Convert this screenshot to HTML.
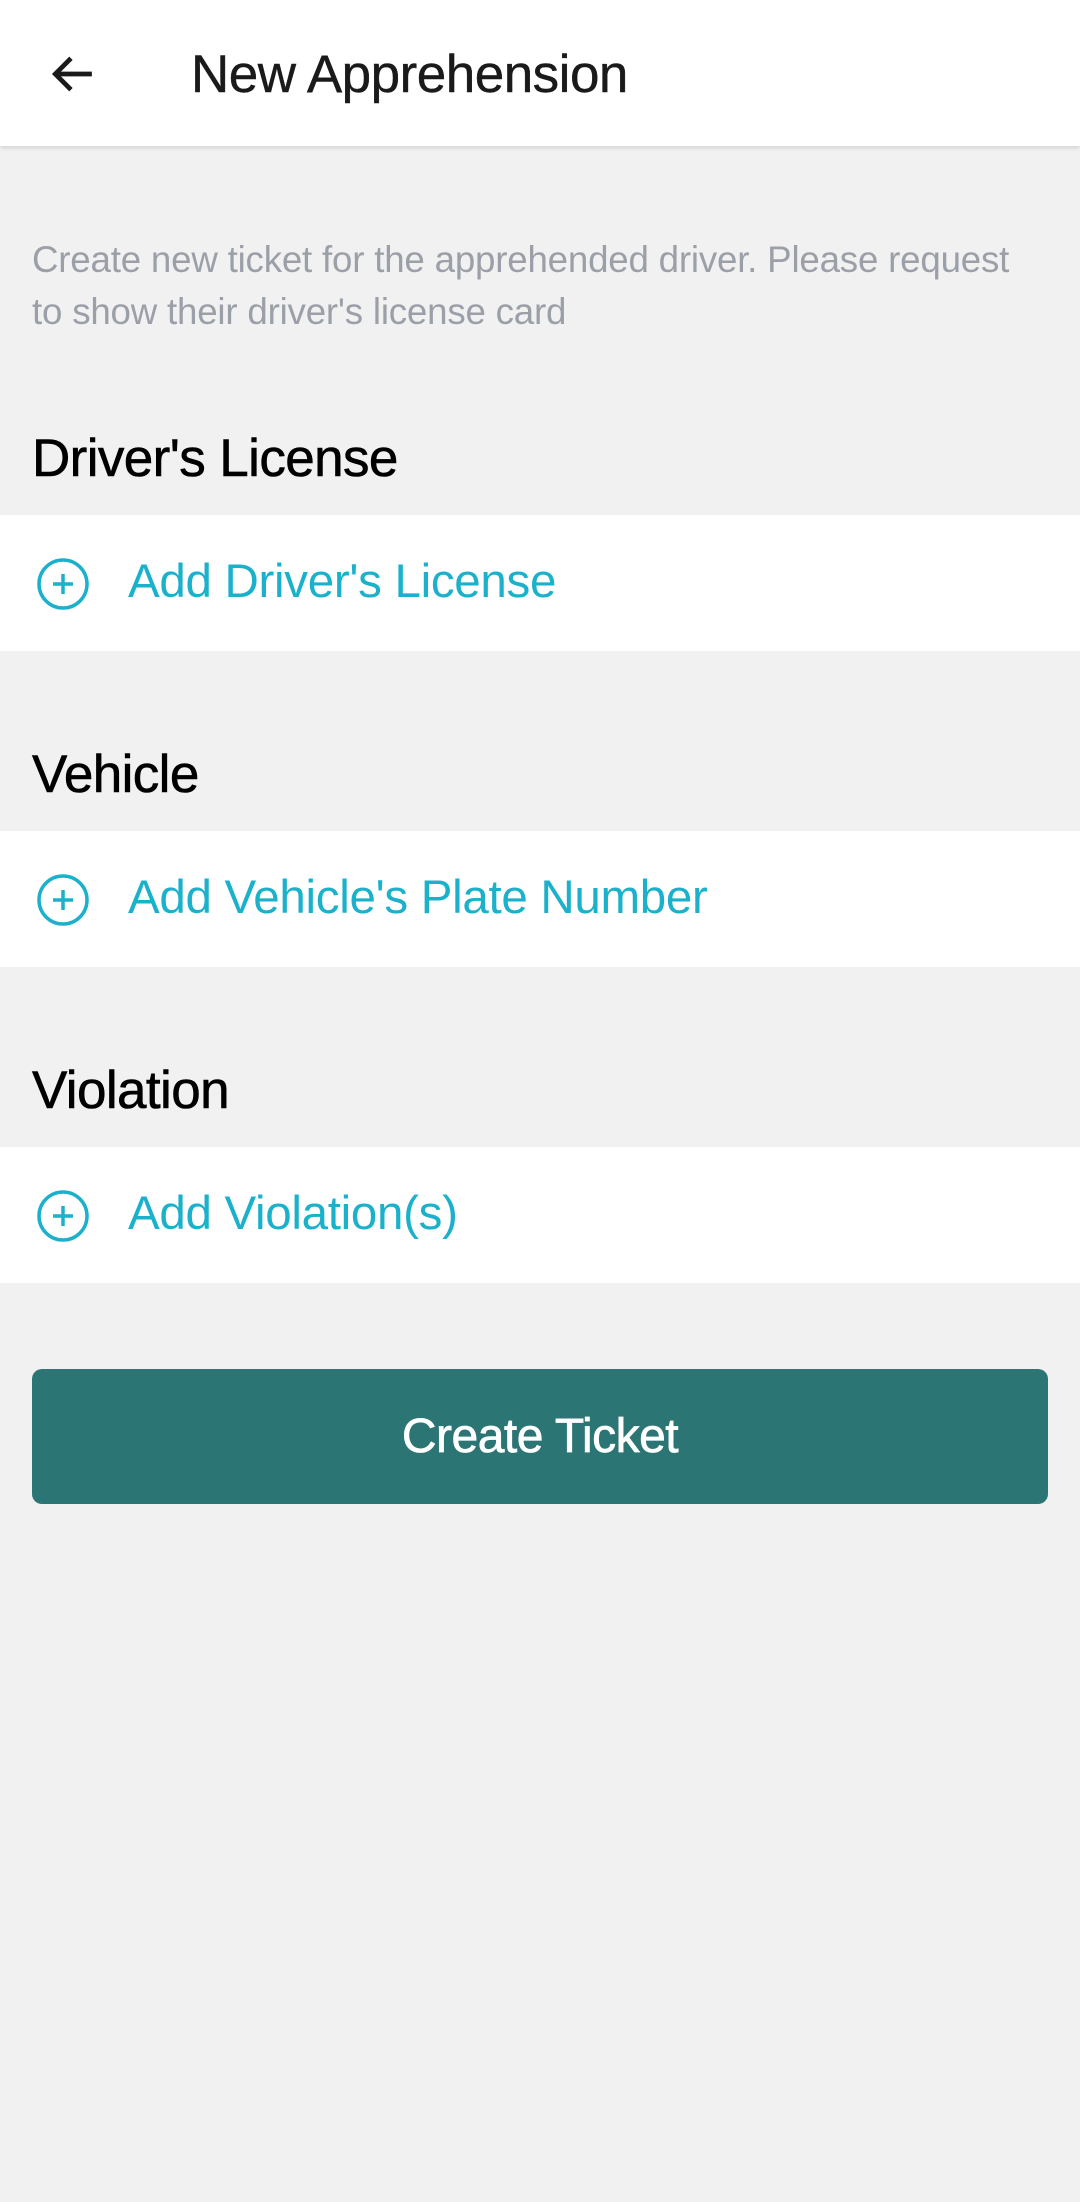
<!DOCTYPE html>
<html><head><meta charset="utf-8"><style>
*{margin:0;padding:0;box-sizing:border-box}
body{width:1080px;height:2202px;background:#f1f1f1;font-family:"Liberation Sans",sans-serif;position:relative;overflow:hidden}
.hdr{position:absolute;left:0;top:0;width:1080px;height:146px;background:#fff;box-shadow:0 2px 4px rgba(0,0,0,0.12)}
.title{position:absolute;left:191px;top:44px;font-size:53px;color:#1a1a1a;line-height:62px;letter-spacing:-0.5px;-webkit-text-stroke:0.4px #1a1a1a}
.desc{position:absolute;left:32px;top:234px;font-size:36.7px;line-height:52px;color:#9ba0a8;width:1040px;letter-spacing:-0.2px}
.h{position:absolute;left:32px;font-size:53px;color:#000;line-height:60px;letter-spacing:-0.6px;-webkit-text-stroke:0.6px #000}
.row{position:absolute;left:0;width:1080px;height:136px;background:#fff}
.row svg{position:absolute;left:35px;top:41px}
.row span{position:absolute;left:128px;top:38px;font-size:47.5px;line-height:58px;color:#1bb1cb;letter-spacing:-0.3px}
.btn{position:absolute;left:32px;top:1369px;width:1016px;height:135px;background:#2b7574;border-radius:10px;color:#fff;font-size:48px;text-align:center;line-height:135px;letter-spacing:-0.5px;-webkit-text-stroke:0.7px #fff}
</style></head><body>
<div class="hdr">
<svg style="position:absolute;left:49px;top:51px" width="46" height="46" viewBox="0 0 44 44"><path d="M41 22H6M21 7L6 22l15 15" fill="none" stroke="#1a1a1a" stroke-width="4.5"/></svg>
<div class="title">New Apprehension</div>
</div>
<div class="desc">Create new ticket for the apprehended driver. Please request<br>to show their driver's license card</div>
<div class="h" style="top:429px">Driver's License</div>
<div class="row" style="top:515px"><svg width="56" height="56" viewBox="0 0 56 56"><circle cx="28" cy="28" r="24" fill="none" stroke="#1bb1cb" stroke-width="3.5"/><path d="M28 18v20M18 28h20" stroke="#1bb1cb" stroke-width="3.5"/></svg><span>Add Driver's License</span></div>
<div class="h" style="top:745px">Vehicle</div>
<div class="row" style="top:831px"><svg width="56" height="56" viewBox="0 0 56 56"><circle cx="28" cy="28" r="24" fill="none" stroke="#1bb1cb" stroke-width="3.5"/><path d="M28 18v20M18 28h20" stroke="#1bb1cb" stroke-width="3.5"/></svg><span>Add Vehicle's Plate Number</span></div>
<div class="h" style="top:1061px">Violation</div>
<div class="row" style="top:1147px"><svg width="56" height="56" viewBox="0 0 56 56"><circle cx="28" cy="28" r="24" fill="none" stroke="#1bb1cb" stroke-width="3.5"/><path d="M28 18v20M18 28h20" stroke="#1bb1cb" stroke-width="3.5"/></svg><span>Add Violation(s)</span></div>
<div class="btn">Create Ticket</div>
</body></html>
